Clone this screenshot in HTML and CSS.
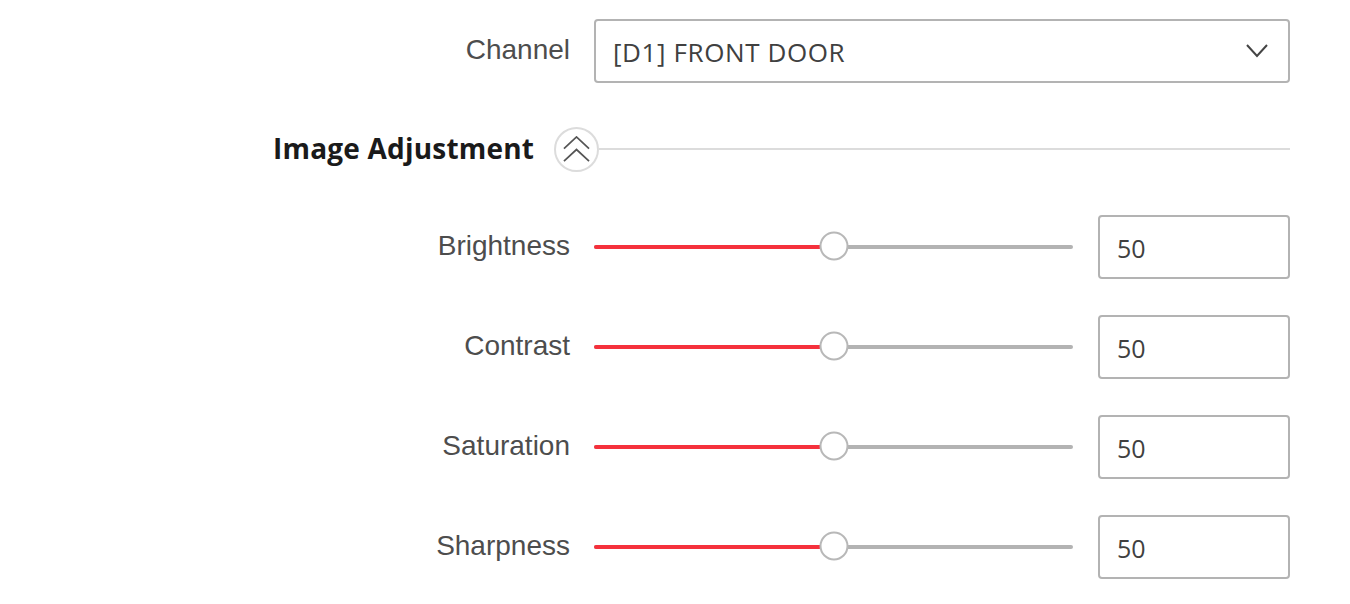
FILE: index.html
```html
<!DOCTYPE html>
<html>
<head>
<meta charset="utf-8">
<link rel="stylesheet" href="styles.css">
</head>
<body>
<div class="page">
  <div class="row">
    <div class="label">Channel</div>
    <div class="select">
      <span class="select-text">[D1] FRONT DOOR</span>
      <svg class="chev" width="22" height="14" viewBox="0 0 22 14"><path d="M1 1 L11 12 L21 1" fill="none" stroke="#444" stroke-width="2"/></svg>
    </div>
  </div>

  <div class="section">
    <div class="section-title">Image Adjustment</div>
    <div class="collapse-btn">
      <svg width="28" height="28" viewBox="0 0 28 28"><path d="M1 13 L14 1 L27 13 M1 26 L14 14 L27 26" fill="none" stroke="#555" stroke-width="1.8"/></svg>
    </div>
    <div class="section-line"></div>
  </div>

  <div class="sliders">
    <div class="row">
      <div class="label">Brightness</div>
      <div class="slider-wrap">
        <div class="slider"><div class="fill" style="width:50%"></div><div class="thumb" style="left:50%"></div></div>
        <div class="num">50</div>
      </div>
    </div>
    <div class="row">
      <div class="label">Contrast</div>
      <div class="slider-wrap">
        <div class="slider"><div class="fill" style="width:50%"></div><div class="thumb" style="left:50%"></div></div>
        <div class="num">50</div>
      </div>
    </div>
    <div class="row">
      <div class="label">Saturation</div>
      <div class="slider-wrap">
        <div class="slider"><div class="fill" style="width:50%"></div><div class="thumb" style="left:50%"></div></div>
        <div class="num">50</div>
      </div>
    </div>
    <div class="row">
      <div class="label">Sharpness</div>
      <div class="slider-wrap">
        <div class="slider"><div class="fill" style="width:50%"></div><div class="thumb" style="left:50%"></div></div>
        <div class="num">50</div>
      </div>
    </div>
  </div>
</div>
</body>
</html>
```
FILE: styles.css
```css
html, body {
  margin: 0;
  padding: 0;
  background: #fff;
}
.page {
  padding-top: 19px;
  width: 1290px;
}
.row {
  display: grid;
  grid-template-columns: 570px 696px;
  column-gap: 24px;
  align-items: center;
  height: 64px;
}
.label {
  text-align: right;
  font-family: "Liberation Sans", Arial, sans-serif;
  font-size: 28px;
  line-height: 32px;
  padding-bottom: 2px;
  color: #4d4d4d;
}
.select {
  box-sizing: border-box;
  height: 64px;
  border: 2px solid #b3b3b3;
  border-radius: 4px;
  display: flex;
  align-items: center;
  justify-content: space-between;
  padding: 0 20px 0 17px;
}
.select-text {
  font-family: "Open Sans", "Noto Sans", sans-serif;
  font-size: 26px;
  letter-spacing: 0.6px;
  padding-top: 2px;
  color: #404040;
}
.chev {
  display: block;
}
.section {
  display: flex;
  align-items: center;
  margin-top: 44px;
  padding-left: 273px;
  height: 44px;
}
.section-title {
  font-family: "Open Sans", "Noto Sans", sans-serif;
  font-weight: 700;
  font-size: 28px;
  letter-spacing: 0.2px;
  color: #1a1a1a;
  margin-right: 20px;
  padding-bottom: 3px;
}
.collapse-btn {
  box-sizing: border-box;
  width: 45px;
  height: 45px;
  border: 2px solid #dcdcdc;
  border-radius: 50%;
  display: flex;
  align-items: center;
  justify-content: center;
  flex: none;
}
.collapse-btn svg {
  display: block;
  width: 27px;
  height: 27px;
}
.section-line {
  flex: 1;
  height: 2px;
  background: #dcdcdc;
}
.sliders {
  margin-top: 44px;
  display: flex;
  flex-direction: column;
  gap: 36px;
}
.slider-wrap {
  display: flex;
  align-items: center;
  gap: 25px;
}
.slider {
  position: relative;
  width: 479px;
  height: 4px;
  border-radius: 2px;
  background: #b3b3b3;
}
.fill {
  position: absolute;
  left: 0;
  top: 0;
  height: 4px;
  border-radius: 2px 0 0 2px;
  background: #f5313c;
}
.thumb {
  position: absolute;
  top: 1px;
  width: 29px;
  height: 29px;
  box-sizing: border-box;
  border: 2px solid #b8b8b8;
  border-radius: 50%;
  background: #fff;
  transform: translate(-50%, -50%);
}
.num {
  box-sizing: border-box;
  width: 192px;
  height: 64px;
  border: 2px solid #b3b3b3;
  border-radius: 4px;
  display: flex;
  align-items: center;
  padding-left: 17px;
  padding-top: 2px;
  font-family: "Open Sans", "Noto Sans", sans-serif;
  font-size: 25px;
  color: #404040;
}
```
